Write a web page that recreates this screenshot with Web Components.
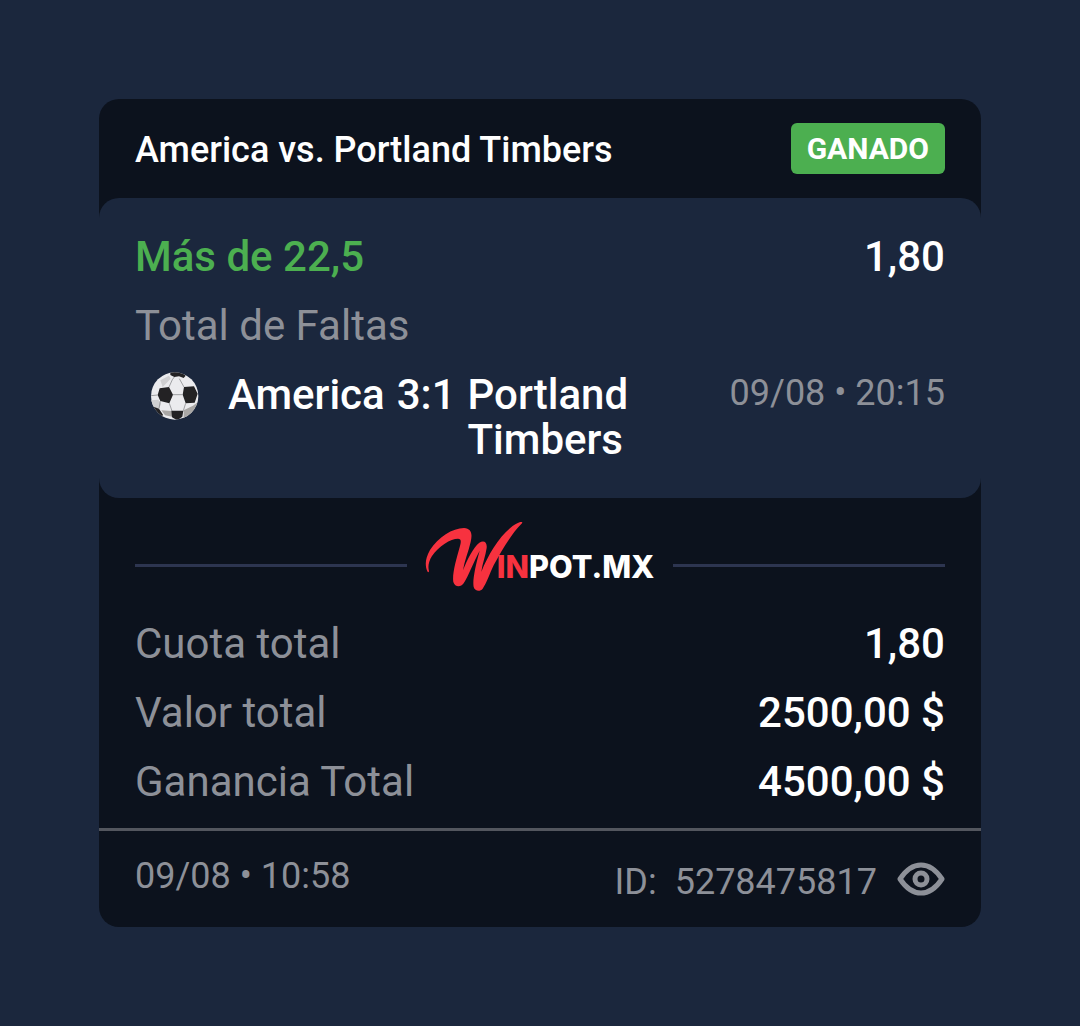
<!DOCTYPE html>
<html lang="es">
<head>
<meta charset="utf-8">
<meta name="viewport" content="width=device-width, initial-scale=1">
<title>Winpot.mx</title>
<style>
  body {
    margin: 0;
    background: #1b273d;
    color: #ffffff;
    font-family: Roboto, "Liberation Sans", sans-serif;
    font-size: 42px;
    line-height: 45px;
    --card: #0c121d;
    --panel: #1b273d;
    --muted: #8d9098;
    --green: #4caf50;
    --rule: #2d3550;
  }
</style>
</head>
<body>
<bet-slip>
  <slip-header slot="header" status="GANADO">America vs. Portland Timbers</slip-header>
  <slip-pick outcome="Más de 22,5" odds="1,80" market="Total de Faltas">
    <match-score home="America" score="3:1" away="Portland Timbers" date="09/08 • 20:15"></match-score>
  </slip-pick>
  <brand-divider></brand-divider>
  <slip-totals>
    <total-row label="Cuota total">1,80</total-row>
    <total-row label="Valor total">2500,00 $</total-row>
    <total-row label="Ganancia Total">4500,00 $</total-row>
  </slip-totals>
  <slip-footer slot="footer" date="09/08 • 10:58" code="5278475817"></slip-footer>
</bet-slip>

<script>
class SlipElement extends HTMLElement {
  constructor() {
    super();
    this.attachShadow({ mode: "open" });
  }

  connectedCallback() {
    this.shadowRoot.innerHTML = this.render();
  }

  attr(name) {
    return this.getAttribute(name) || "";
  }
}

class BetSlip extends SlipElement {
  render() {
    return `
<style>
  :host {
    display: block;
    padding: 99px;
  }

  article {
    background: var(--card);
    border-radius: 20px;
    overflow: hidden;
  }
</style>
<article>
  <slot name="header"></slot>
  <slot></slot>
  <slot name="footer"></slot>
</article>`;
  }
}

class SlipHeader extends SlipElement {
  render() {
    return `
<style>
  :host {
    display: block;
    padding: 24px 36px;
  }

  header {
    display: flex;
    align-items: flex-end;
    justify-content: space-between;
    gap: 24px;
  }

  h1 {
    margin: 0;
    font-size: 36px;
    font-weight: 500;
    line-height: 48px;
  }

  .status {
    padding: 3px 16px;
    border-radius: 6px;
    background: var(--green);
    font-size: 30px;
    font-weight: 700;
  }
</style>
<header>
  <h1><slot></slot></h1>
  <span class="status">${this.attr("status")}</span>
</header>`;
  }
}

class SlipPick extends SlipElement {
  render() {
    return `
<style>
  :host {
    display: flex;
    flex-direction: column;
    gap: 24px;
    padding: 36px;
    border-radius: 20px;
    background: var(--panel);
  }

  .pick {
    display: flex;
    justify-content: space-between;
    font-weight: 500;
  }

  .outcome {
    color: var(--green);
  }

  .market {
    color: var(--muted);
  }
</style>
<div class="pick">
  <span class="outcome">${this.attr("outcome")}</span>
  <span>${this.attr("odds")}</span>
</div>
<div class="market">${this.attr("market")}</div>
<slot></slot>`;
  }
}

class MatchScore extends SlipElement {
  render() {
    return `
<style>
  :host {
    display: flex;
    align-items: flex-start;
    justify-content: space-between;
    gap: 24px;
  }

  .match {
    display: flex;
    align-items: flex-start;
    gap: 12px;
    padding-left: 15px;
    font-weight: 500;
  }

  svg {
    flex: none;
    width: 50px;
    height: 48px;
    margin-right: 16px;
  }

  .away {
    max-width: 180px;
  }

  time {
    flex: none;
    color: var(--muted);
    font-size: 36px;
    line-height: 42px;
  }
</style>
<div class="match">
  <svg viewBox="33 35 150 144" aria-hidden="true">
    <defs>
      <clipPath id="ball"><circle cx="107" cy="107" r="71"/></clipPath>
    </defs>
    <g clip-path="url(#ball)">
      <path fill="#ebebee" d="M30 30h160v155H30z"/>
      <path fill="#cfcfd1" d="M64 60l26-14 5 9-24 25zM36 120l22-2 8 12-6 16-22-8z"/>
      <path fill="#a9a7a5" d="M134 150l28-14 16-12-14 30-30 22zM67 150l31 2 2 17-22-4z"/>
      <path fill="#232224" d="M62 84l28-4 12 23-11 26-27-7-8-18zM135 80l30-2 11 22-9 27-27 2-9-26zM97 151h36l-3 18-15 11-16-9zM94 34h32l14 12-6 7-14-5-14 2-12-6zM38 137l22 8 12 18-4 8-32-26z"/>
      <path fill="none" stroke="#77787b" stroke-width="2" d="M102 103h29M90 80l10-22 6-8M135 80l-14-25M91 129l8 23M140 129l-7 22M56 104l-20 2M64 122l-4 23"/>
    </g>
  </svg>
  <span>${this.attr("home")}</span>
  <span>${this.attr("score")}</span>
  <span class="away">${this.attr("away")}</span>
</div>
<time>${this.attr("date")}</time>`;
  }
}

class BrandDivider extends SlipElement {
  render() {
    return `
<style>
  :host {
    display: flex;
    align-items: center;
    gap: 18px;
    padding: 24px 36px 12px;
  }

  .rule {
    flex: 1;
    height: 3px;
    background: var(--rule);
  }

  svg {
    flex: none;
    width: 230px;
    height: 87px;
    overflow: visible;
  }

  text {
    font: 800 92px Inter, "Open Sans", sans-serif;
  }
</style>
<span class="rule"></span>
<svg viewBox="45 36 690 261" role="img" aria-label="Winpot.mx">
  <path fill="#f7323f" d="M52 184C44 166 46 144 60 120C84 82 128 54 162 54C184 56 188 70 182 96C175 126 163 154 159 181C172 148 190 112 208 98C220 90 232 94 230 114C227 136 217 162 214 185C238 126 278 62 322 40C330 36 340 34 336 40C300 76 272 128 251 166C240 188 230 220 218 236C210 246 195 244 191 231C187 212 196 168 209 122C190 158 176 196 161 220C152 233 134 231 130 216C126 194 138 150 149 112C154 94 154 86 144 86C122 86 86 108 66 138C56 154 53 170 57 183C57 187 54 188 52 184Z"/>
  <text x="260" y="204" fill="#f7323f">IN</text>
  <text x="357" y="204" fill="#ffffff">POT.MX</text>
</svg>
<span class="rule"></span>`;
  }
}

class SlipTotals extends SlipElement {
  render() {
    return `
<style>
  :host {
    display: flex;
    flex-direction: column;
    gap: 24px;
    padding: 0 36px 24px;
  }
</style>
<slot></slot>`;
  }
}

class TotalRow extends SlipElement {
  render() {
    return `
<style>
  :host {
    display: flex;
    justify-content: space-between;
  }

  .label {
    color: var(--muted);
  }

  .value {
    font-weight: 500;
  }
</style>
<span class="label">${this.attr("label")}</span>
<span class="value"><slot></slot></span>`;
  }
}

class SlipFooter extends SlipElement {
  render() {
    return `
<style>
  :host {
    display: block;
    padding: 24px 36px;
    border-top: 3px solid #53565e;
    color: var(--muted);
    font-size: 36px;
    line-height: 42px;
  }

  footer {
    display: flex;
    align-items: flex-start;
    justify-content: space-between;
  }

  .code {
    display: flex;
    align-items: flex-end;
    gap: 18px;
  }

  button {
    display: block;
    padding: 0;
    border: 0;
    margin-left: 2px;
    background: none;
    color: inherit;
    cursor: pointer;
  }

  svg {
    display: block;
    width: 48px;
    height: 48px;
  }
</style>
<footer>
  <time>${this.attr("date")}</time>
  <div class="code">
    <span>ID:</span>
    <span>${this.attr("code")}</span>
    <button type="button" aria-label="Ver apuesta">
      <svg viewBox="0 0 48 48" fill="none" stroke="currentColor" stroke-width="5" stroke-linejoin="round">
        <path d="M3 24C9 15 15 10 24 10s15 5 21 14c-6 9-12 14-21 14S9 33 3 24z"/>
        <circle cx="24" cy="24" r="6"/>
      </svg>
    </button>
  </div>
</footer>`;
  }
}

window.customElements.define("bet-slip", BetSlip);
window.customElements.define("slip-header", SlipHeader);
window.customElements.define("slip-pick", SlipPick);
window.customElements.define("match-score", MatchScore);
window.customElements.define("brand-divider", BrandDivider);
window.customElements.define("slip-totals", SlipTotals);
window.customElements.define("total-row", TotalRow);
window.customElements.define("slip-footer", SlipFooter);
</script>
</body>
</html>
